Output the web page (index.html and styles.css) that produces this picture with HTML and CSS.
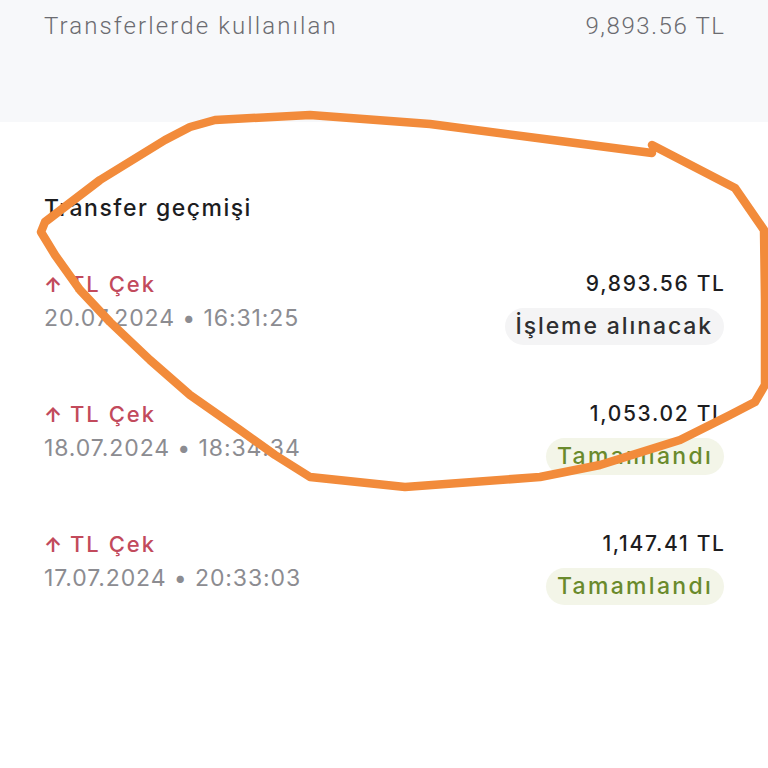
FILE: index.html
```html
<!DOCTYPE html>
<html lang="tr">
<head>
<meta charset="utf-8">
<link rel="stylesheet" href="styles.css">
</head>
<body>
<div class="page">
  <div class="summary">
    <span class="summary-label">Transferlerde kullanılan</span>
    <span class="summary-value">9,893.56 TL</span>
  </div>
  <div class="history">
    <h2 class="history-title">Transfer geçmişi</h2>
    <div class="row">
      <div class="row-left">
        <div class="row-type"><span class="arrow">↑</span> TL Çek</div>
        <div class="row-date">20.07.2024 • 16:31:25</div>
      </div>
      <div class="row-right">
        <div class="row-amount">9,893.56 TL</div>
        <span class="badge badge-pending">İşleme alınacak</span>
      </div>
    </div>
    <div class="row">
      <div class="row-left">
        <div class="row-type"><span class="arrow">↑</span> TL Çek</div>
        <div class="row-date">18.07.2024 • 18:34:34</div>
      </div>
      <div class="row-right">
        <div class="row-amount">1,053.02 TL</div>
        <span class="badge badge-done">Tamamlandı</span>
      </div>
    </div>
    <div class="row">
      <div class="row-left">
        <div class="row-type"><span class="arrow">↑</span> TL Çek</div>
        <div class="row-date">17.07.2024 • 20:33:03</div>
      </div>
      <div class="row-right">
        <div class="row-amount">1,147.41 TL</div>
        <span class="badge badge-done">Tamamlandı</span>
      </div>
    </div>
  </div>
  <svg class="scribble" width="768" height="768" viewBox="0 0 768 768">
    <path d="M652 153 L560 141 L430 124 L310 115 L215 120 L190 127 L165 140 L100 180 L45 222 L41 232 L55 255 L80 290 L110 322 L150 360 L190 395 L240 430 L275 455 L310 477 L405 487 L540 477 L600 465 L680 440 L730 415 L755 402 L765 385 L765 300 L764 230 L735 188 L652 145" fill="none" stroke="#f28b3b" stroke-width="8.5" stroke-linecap="round" stroke-linejoin="round"/>
  </svg>
</div>
</body>
</html>
```
FILE: styles.css
```css
html, body {
  margin: 0;
  padding: 0;
  background: #ffffff;
}
.page {
  position: relative;
  width: 768px;
  height: 768px;
  overflow: hidden;
  font-family: Inter, "Noto Sans", sans-serif;
}
.summary {
  height: 122px;
  box-sizing: border-box;
  background: #f7f8fa;
  padding: 12px 44px 0 44px;
  display: flex;
  justify-content: space-between;
  align-items: flex-start;
  font-family: Roboto, sans-serif;
  font-weight: 300;
  font-size: 24px;
  line-height: 28px;
  color: #6b6b70;
}
.summary-label {
  letter-spacing: 2.1px;
}
.summary-value {
  letter-spacing: 1.6px;
  margin-right: -1.6px;
}
.history {
  padding: 72px 44px 0 44px;
}
.history-title {
  margin: 0;
  font-size: 23px;
  line-height: 28px;
  font-weight: 500;
  letter-spacing: 1.5px;
  color: #1d1d1f;
}
.row {
  display: flex;
  justify-content: space-between;
  align-items: flex-start;
  margin-top: 48px;
  height: 82px;
}
.row-left {
  display: flex;
  flex-direction: column;
  gap: 5px;
}
.row-type {
  font-size: 22px;
  line-height: 28px;
  font-weight: 500;
  letter-spacing: 2px;
  color: #c24a5c;
}
.arrow {
  font-size: 20px;
  font-weight: 700;
  letter-spacing: 0;
}
.row-date {
  font-size: 23px;
  line-height: 28px;
  letter-spacing: 0.9px;
  color: #8c8c91;
}
.row-right {
  display: flex;
  flex-direction: column;
  align-items: flex-end;
  gap: 10px;
}
.row-amount {
  font-size: 21px;
  line-height: 28px;
  font-weight: 500;
  letter-spacing: 1.7px;
  margin-right: -1.7px;
  color: #1d1d1f;
}
.badge {
  display: inline-block;
  font-size: 23px;
  line-height: 37px;
  padding: 0 11px;
  border-radius: 19px;
  font-weight: 500;
}
.badge-pending {
  background: #f4f4f5;
  color: #2e2e30;
  letter-spacing: 1.9px;
}
.badge-done {
  background: #f3f5e8;
  color: #6a8a2c;
  letter-spacing: 2.3px;
}
.scribble {
  position: absolute;
  left: 0;
  top: 0;
  pointer-events: none;
}
```
